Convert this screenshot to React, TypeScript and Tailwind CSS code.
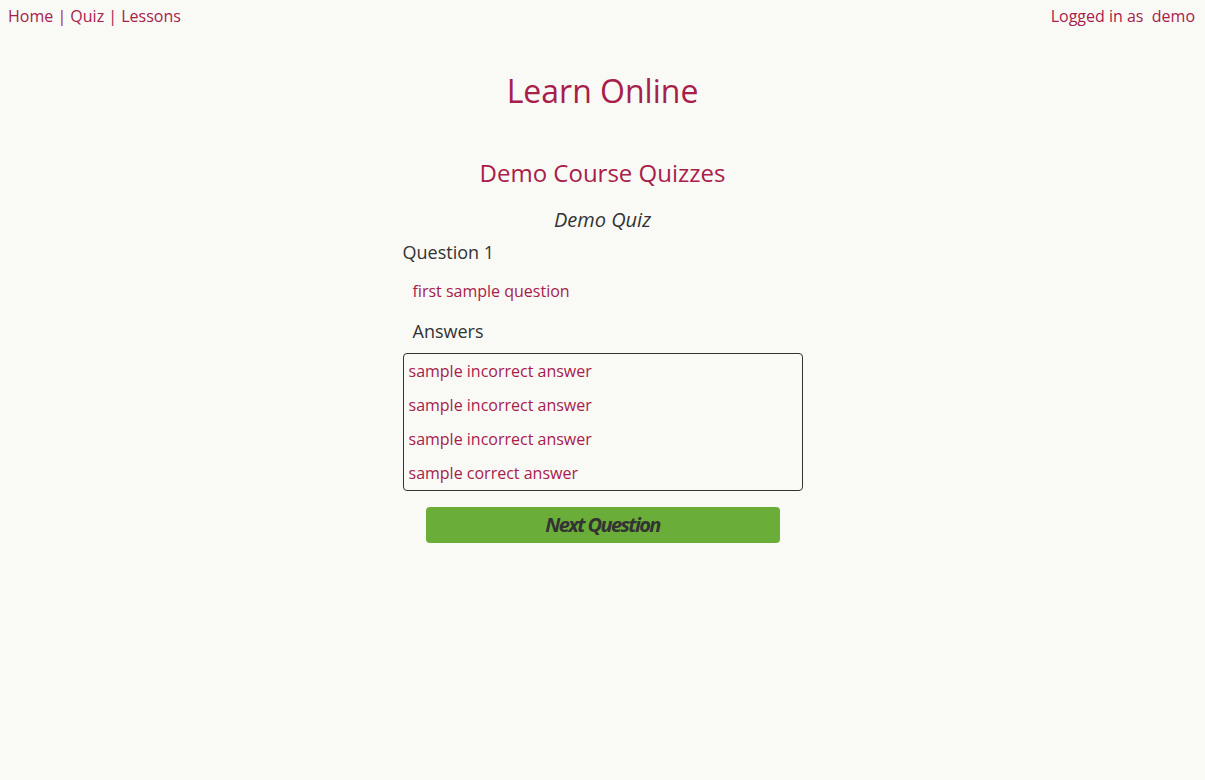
import React from "react";

const answers = [
  "sample incorrect answer",
  "sample incorrect answer",
  "sample incorrect answer",
  "sample correct answer",
];

export default function App() {
  return (
    <div
      className="min-h-[780px] bg-[#f9faf6] text-[#a8204a]"
      style={{ fontFamily: '"Open Sans", sans-serif' }}
    >
      {/* Top nav */}
      <div className="flex justify-between px-2 pt-[5px] text-base leading-[22px]">
        <div>
          <span>Home</span> | <span>Quiz</span> | <span>Lessons</span>
        </div>
        <div className="pr-[2px] whitespace-pre">Logged in as  demo</div>
      </div>

      <h1 className="mt-[42px] text-center text-[32px] leading-[44px]">Learn Online</h1>

      <h2 className="mt-[44px] text-center text-2xl leading-[32px]">Demo Course Quizzes</h2>

      <div className="mx-auto mt-[17px] w-[400px]">
        <p className="text-center text-xl italic leading-[28px] text-[#333]">Demo Quiz</p>
        <p className="mt-[6px] text-lg leading-[24px] text-[#333]">Question 1</p>
        <p className="mt-[16px] pl-[10px] text-base leading-[22px]">first sample question</p>
        <p className="mt-[17px] pl-[10px] text-lg leading-[24px] text-[#333]">Answers</p>

        <ul className="mt-[10px] rounded border border-[#333]">
          {answers.map((a, i) => (
            <li key={i} className="px-[5px] py-[6px] text-base leading-[22px]">
              {a}
            </li>
          ))}
        </ul>

        <button className="mx-auto mt-[16px] block h-9 w-[354px] rounded-sm bg-[#6aad39] text-xl font-bold italic tracking-[-1.6px] text-[#333]">
          Next Question
        </button>
      </div>
    </div>
  );
}
